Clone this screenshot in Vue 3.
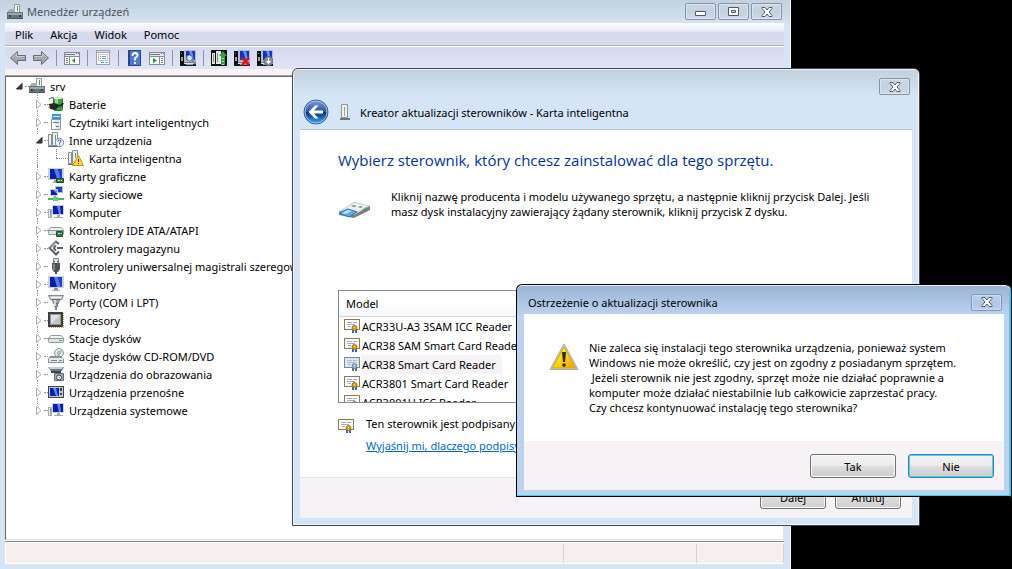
<template>
  <div class="desktop">
    <svg class="sprite" aria-hidden="true">
      <symbol id="i-monitor" viewBox="0 0 16 16">
        <path d="M0 0h16v12H0z" fill="#c9d3d9" />
        <path d="M2 1h12v10H2z" fill="#0a1fa8" />
        <path d="M6 1h4l3 10H9z" fill="#4f7df0" />
        <path d="M10 1h4v10h-1z" fill="#1c3fd8" />
        <path d="M6 12h4v2H6z" fill="#8e979c" />
        <path d="M4 14h8v1H4z" fill="#a4acb0" />
      </symbol>
      <symbol id="i-root" viewBox="0 0 16 16">
        <path d="M7.500.5h5v8h-5z" fill="#f4f6f6" stroke="#909898" />
        <path d="M10 2h1v5h-1z" fill="#4a9a48" />
        <path d="M1 7l2-2h5v3h7v2H1z" fill="#a3afb6" />
        <path d="M0 8h16v6H0z" fill="#66747c" />
        <path d="M1 9h14v2H1z" fill="#9aa7ae" />
        <path d="M2 11h2v2H2zM12 11h2v2h-2z" fill="#3b464d" />
        <path d="M0 14h16v1H0z" fill="#48535a" />
      </symbol>
      <symbol id="i-battery" viewBox="0 0 16 16">
        <rect x="5.500" y="1.500" width="9" height="13" rx="2" fill="#35a83c" stroke="#1c6b22" />
        <path d="M7 3h3v10H7z" fill="#8de083" />
        <path d="M6 1h8v2H6z" fill="#dfe6df" />
        <path d="M0 8.500h2M0 11.500h2" stroke="#d2a53a" />
        <path d="M1 8l5-1 4 1v4l-3 2-5-1z" fill="#242a26" />
        <path d="M10 10q4 0 5-3" fill="none" stroke="#242a26" stroke-width="2" />
        <path d="M1 3q2-2 5-1" fill="none" stroke="#454b46" />
      </symbol>
      <symbol id="i-reader" viewBox="0 0 16 16">
        <path d="M4 0h9v6H4z" fill="#2f9ae0" />
        <path d="M5 2h7v1H5z" fill="#d6effb" />
        <path d="M3.500 5.500h9v10h-9z" fill="#e4e8ea" stroke="#8b9499" />
        <path d="M4 6h3v9H4z" fill="#fff" />
        <path d="M5 8.500h6M8 12.500h3" stroke="#6e797f" />
      </symbol>
      <symbol id="i-unknown" viewBox="0 0 16 16">
        <path d="M.5 2.500h3v11h-3zM4.500.5h5v13h-5z" fill="#edf0f0" stroke="#858e91" />
        <path d="M7 3h1v5H7z" fill="#58a84a" />
        <path d="M0 14h11v1H0z" fill="#626b6e" />
        <circle cx="11.500" cy="10.500" r="4.200" fill="#eef5fe" stroke="#7488b8" />
        <path d="M10 9.500q0-1.500 1.500-1.500t1.500 1.200q0 1-1.500 1.600v.8M11.500 12.500v1" fill="none" stroke="#254ec2" />
      </symbol>
      <symbol id="i-warn-device" viewBox="0 0 16 16">
        <path d="M.5 2.500h3v11h-3zM4.500.5h5v13h-5z" fill="#edf0f0" stroke="#858e91" />
        <path d="M7 3h1v5H7z" fill="#58a84a" />
        <path d="M0 14h9v1H0z" fill="#626b6e" />
        <path d="M10.500 5.500L15.500 15.500h-11z" fill="#ffd928" stroke="#c79409" />
        <path d="M10 9h1v3h-1zM10 13h1v1h-1z" fill="#3a3000" />
      </symbol>
      <symbol id="i-display" viewBox="0 0 16 16">
        <use href="#i-monitor" />
        <path d="M8.500 10.500h7v4h-7z" fill="#317c48" stroke="#1d4f2c" />
        <path d="M10 12h2v1h-2zM13 12h1v1h-1z" fill="#c8ead0" />
      </symbol>
      <symbol id="i-network" viewBox="0 0 16 16">
        <path d="M7.500.5h7v6h-7z" fill="#1d3bce" stroke="#b3c0d2" />
        <path d="M2.500 3.500h7v6h-7z" fill="#0a20a8" stroke="#c6d0dd" />
        <path d="M5 4h4v4z" fill="#6f98f2" />
        <path d="M6 10h2v3H6z" fill="#8b989e" />
        <path d="M0 12h16v2H0z" fill="#45b765" />
        <path d="M5 11h5v4H5z" fill="#6cc98a" />
      </symbol>
      <symbol id="i-computer" viewBox="0 0 16 16">
        <path d="M4 1h12v10H4z" fill="#c9d3d9" />
        <path d="M5 2h10v8H5z" fill="#0a1fa8" />
        <path d="M9 2h3l1 8h-2z" fill="#5a86f2" />
        <path d="M9 11h3v2H9zM6 13h9v1H6z" fill="#a1abb0" />
        <path d="M0 5h4v9H0z" fill="#a6b0b5" />
        <path d="M1 6h1v7H1z" fill="#e8eced" />
        <path d="M2 7h1v2H2z" fill="#46a448" />
      </symbol>
      <symbol id="i-drive" viewBox="0 0 16 16">
        <path d="M3 5h10l3 3v3q0 2-2 2H2q-2 0-2-2V8z" fill="#8f999d" />
        <path d="M3 6h10l2 2H1z" fill="#eef1f2" />
        <path d="M1 9h14v3H1z" fill="#dfe4e5" />
        <path d="M11 10h3v1h-3z" fill="#39b54a" />
      </symbol>
      <symbol id="i-ide" viewBox="0 0 16 16">
        <use href="#i-drive" />
        <path d="M8.500 9.500h6v5h-6z" fill="#317c48" stroke="#1d4f2c" />
        <path d="M10 11h2v1h-2zM13 11h1v1h-1z" fill="#c8ead0" />
      </symbol>
      <symbol id="i-storage" viewBox="0 0 16 16">
        <path d="M11 4L8 1.500 1.500 8 8 14.500l3-3M5.500 8L8 5.500M8 10.500L5.500 8M9 8h6" fill="none" stroke="#596165" stroke-width="2" />
        <path d="M2 7.500l6-6" stroke="#aeb4b6" />
      </symbol>
      <symbol id="i-usb" viewBox="0 0 16 16">
        <path d="M5.500.5h5v5h-5z" fill="#d9dddf" stroke="#7c8488" />
        <path d="M6 3h1v1H6zM9 3h1v1H9z" fill="#5a6266" />
        <path d="M4 5h8v6l-2 3H6l-2-3z" fill="#4c5356" />
        <path d="M5 6h2v6H5z" fill="#7d868a" />
        <path d="M7 14h2v2H7z" fill="#4c5356" />
      </symbol>
      <symbol id="i-port" viewBox="0 0 16 16">
        <path d="M.5 1.500h15l-2 4h-11z" fill="#c8ced1" stroke="#7e888d" />
        <path d="M3 3h10v1H3z" fill="#fff" />
        <path d="M4.500 5.500h7l-1 4h-5z" fill="#9da6ab" stroke="#69747a" />
        <path d="M6 10h4v3H6zM7 13h2v3H7z" fill="#7e888d" />
        <path d="M6 6h2v6H6z" fill="#d5dadc" />
      </symbol>
      <symbol id="i-cpu" viewBox="0 0 16 16">
        <path d="M0 0h15v15H0z" fill="#3b4043" />
        <path d="M2 2h11v11H2z" fill="#8f979a" />
        <path d="M3 3h9v9H3z" fill="#dfe3e4" />
        <path d="M12 3v9H3z" fill="#bec5c8" />
        <path d="M1 15.500h15M15.500 1v14" stroke="#c99a31" stroke-dasharray="1 1" />
      </symbol>
      <symbol id="i-disc" viewBox="0 0 16 16">
        <circle cx="11" cy="5" r="4.500" fill="#dfe6ea" stroke="#8c979c" />
        <path d="M11 5l3-4 1 2zM11 5L8 9l4 0z" fill="#8dcf9a" />
        <circle cx="11" cy="5" r="1.300" fill="#fff" stroke="#89939a" />
        <path d="M2 8h11l3 3v4H0v-4z" fill="#8a9498" />
        <path d="M1 10h14v4H1z" fill="#e3e7e8" />
        <path d="M3 12h6v1H3z" fill="#798488" />
        <path d="M11 12h3v1h-3z" fill="#39b54a" />
      </symbol>
      <symbol id="i-imaging" viewBox="0 0 16 16">
        <path d="M0 1h16l-2 4H3z" fill="#6f7b80" />
        <path d="M1 1h14l-1 2H2z" fill="#b9d6de" />
        <path d="M3 5h10v2H3z" fill="#3e484c" />
        <path d="M6.500 7.500h9v7h-9z" fill="#a5afb3" stroke="#616c71" />
        <circle cx="11" cy="11.500" r="2.500" fill="#e8f2f7" stroke="#3b454b" />
        <path d="M11 11h1v1h-1z" fill="#247fc0" />
      </symbol>
      <symbol id="i-portable" viewBox="0 0 16 16">
        <path d="M0 2h16v12H0z" fill="#3f4649" />
        <path d="M1 3h14v10H1z" fill="#c2c8ca" />
        <path d="M2 4h9v8H2z" fill="#0a20a8" />
        <path d="M5 4h3l2 8H8z" fill="#5e8af2" />
        <path d="M12 4h2v3h-2zM12 9h2v2h-2z" fill="#3f4649" />
      </symbol>
      <symbol id="i-cert" viewBox="0 0 16 16">
        <path d="M0 1h16v11H0z" fill="#8b7a55" />
        <path d="M1 2h14v9H1z" fill="#fffdf5" />
        <path d="M3 4.500h5M9 4.500h4M3 6.500h8M4 8.500h3" stroke="#9baad6" />
        <path d="M8 11h2v4H8zM11 11h2v4h-2z" fill="#2b62d4" />
        <circle cx="10.500" cy="10" r="2.500" fill="#dfa416" stroke="#aa7408" />
        <path d="M10 9h1v1h-1z" fill="#ffe792" />
      </symbol>
      <symbol id="i-back" viewBox="0 0 16 16">
        <path d="M7.500 1.500v4h8v5h-8v4L.5 8z" fill="#a4a6ad" stroke="#686a70" stroke-linejoin="round" />
        <path d="M2.500 7.500l4-4v3h8" fill="none" stroke="#c9cbd0" />
      </symbol>
      <symbol id="i-forward" viewBox="0 0 16 16">
        <path d="M8.500 1.500v4h-8v5h8v4l7-6.500z" fill="#a4a6ad" stroke="#686a70" stroke-linejoin="round" />
        <path d="M1.500 6.500h8v-3l4 4" fill="none" stroke="#c9cbd0" />
      </symbol>
      <symbol id="i-pane-left" viewBox="0 0 16 16">
        <path d="M0 2h16v13H0z" fill="#868b92" />
        <path d="M1 7h4v7H1zM6 7h9v7H6z" fill="#fff" />
        <path d="M1 3h14v3H1z" fill="#e2e5ea" />
        <path d="M1 4h10v1H1zM12 3h1v1h-1zM14 3h1v1h-1zM2 8h2v1H2zM2 10h2v1H2zM2 12h2v1H2z" fill="#747980" />
        <path d="M11 8v5L8 10.500z" fill="#17a020" />
      </symbol>
      <symbol id="i-pane-right" viewBox="0 0 16 16">
        <path d="M0 2h16v13H0z" fill="#868b92" />
        <path d="M1 7h9v7H1zM11 7h4v7h-4z" fill="#fff" />
        <path d="M1 3h14v3H1z" fill="#e2e5ea" />
        <path d="M1 4h10v1H1zM12 3h1v1h-1zM14 3h1v1h-1zM12 8h2v1h-2zM12 10h2v1h-2zM12 12h2v1h-2z" fill="#747980" />
        <path d="M4 8v5l4-2.500z" fill="#17a020" />
      </symbol>
      <symbol id="i-props" viewBox="0 0 16 16">
        <path d="M1 0h14v15H1z" fill="#9ca1a8" />
        <path d="M2 3h12v11H2z" fill="#fff" />
        <path d="M2 1h12v1H2z" fill="#e2e4e8" />
        <path d="M3 4h10v7H3z" fill="#bfc3c9" />
        <path d="M4 5h8v5H4z" fill="#fff" />
        <path d="M5 6h1v1H5zM5 8h1v1H5z" fill="#2a9fcb" />
        <path d="M7 6h4v1H7zM7 8h4v1H7z" fill="#8c9198" />
        <path d="M6 12h3v1H6zM10 12h3v1h-3z" fill="#37b7df" />
      </symbol>
      <symbol id="i-help" viewBox="0 0 16 16">
        <path d="M2 0h13v16H2z" fill="#24439a" />
        <path d="M4 1h10v14H4z" fill="#4e78d6" />
        <path d="M6.500 6q0-3 2.500-3t2.500 2.500Q11.500 7 9 8v2.500M9 12v2" fill="none" stroke="#fff" stroke-width="1.800" />
      </symbol>
      <symbol id="i-tool-pc" viewBox="0 0 16 16">
        <path d="M0 1h4v13H0z" fill="#111" />
        <path d="M1 7h2v4H1z" fill="#9ca3a8" />
        <path d="M1 3h1v1H1z" fill="#35b84b" />
        <path d="M4 0h12v13H4z" fill="#b4bcc4" />
        <path d="M6 1h9v9H6z" fill="#1531c8" />
        <path d="M9 1h3l2 9h-2z" fill="#6894f4" />
        <path d="M4 12h12v1H4z" fill="#777f86" />
        <path d="M0 14h16v2H0z" fill="#16181a" />
        <path d="M6 14h7v1H6z" fill="#9aa1a7" />
      </symbol>
      <symbol id="i-scan" viewBox="0 0 16 16">
        <use href="#i-tool-pc" />
        <circle cx="9.500" cy="8" r="3" fill="#cde8fa" stroke="#5f6a75" />
        <path d="M11.500 10l4 4" stroke="#7b848e" stroke-width="2" />
      </symbol>
      <symbol id="i-update" viewBox="0 0 16 16">
        <path d="M0 0h16v16H0z" fill="#111" />
        <path d="M1 3h3v11H1zM5 1h5v13H5z" fill="#e3e7e5" />
        <path d="M2 4h1v8H2zM6 3h1v9H6z" fill="#7f8a84" />
        <path d="M12 1l4 5h-2v9h-4V6H8z" fill="#2ea043" />
        <path d="M11 8.500h2M11 11.500h2M11 14.500h2" stroke="#a3e3ad" />
      </symbol>
      <symbol id="i-uninstall" viewBox="0 0 16 16">
        <use href="#i-tool-pc" />
        <path d="M8 8l7 7M15 8l-7 7" stroke="#e01414" stroke-width="2.500" />
      </symbol>
      <symbol id="i-disable" viewBox="0 0 16 16">
        <use href="#i-tool-pc" />
        <circle cx="11.500" cy="11" r="4.500" fill="#8a9096" stroke="#61676d" />
        <path d="M11 8h1v3h2l-2.500 3L9 11h2z" fill="#fff" />
      </symbol>
      <symbol id="i-close" viewBox="0 0 12 10">
        <path d="M1 .5h3L6 3 8 .5h3v1L8 5l3 3.500v1H8L6 7 4 9.500H1v-1L4 5 1 1.500z" fill="#fff" stroke="#50596b" />
      </symbol>
    </svg>

    <section class="window window--main">
      <header class="titlebar">
        <svg class="icon"><use href="#i-root" /></svg>
        <h1 class="titlebar__text">Menedżer urządzeń</h1>
        <div class="titlebar__buttons">
          <button type="button" class="caption-btn" aria-label="Minimalizuj">
            <svg width="12" height="10"><path d="M.5 4.500h10v4H.5z" fill="#fff" stroke="#50596b" /></svg>
          </button>
          <button type="button" class="caption-btn" aria-label="Maksymalizuj">
            <svg width="12" height="10">
              <path d="M.5.5h10v8H.5z" fill="#fff" stroke="#50596b" />
              <path d="M3.500 3.500h4v2h-4z" fill="#c8d5e4" stroke="#50596b" />
            </svg>
          </button>
          <button type="button" class="caption-btn" aria-label="Zamknij">
            <svg width="12" height="10"><use href="#i-close" /></svg>
          </button>
        </div>
      </header>

      <div class="main">
        <nav class="menubar">
          <button v-for="item in menu" :key="item" type="button" class="menubar__item">{{ item }}</button>
        </nav>

        <div class="toolbar">
          <div v-for="(group, i) in tools" :key="i" class="toolbar__group">
            <button
              v-for="tool in group"
              :key="tool.icon"
              type="button"
              class="toolbar__btn"
              :aria-label="tool.label"
            >
              <svg class="icon"><use :href="`#i-${tool.icon}`" /></svg>
            </button>
          </div>
        </div>

        <ul class="tree">
          <li
            v-for="node in nodes"
            :key="node.label"
            :class="['tree__row', `tree__row--level${node.level}`]"
          >
            <span class="tree__toggle">
              <svg v-if="node.open" width="7" height="7"><path d="M6 .5V6H.5z" fill="#404040" stroke="#222" /></svg>
              <svg v-else-if="node.level < 2" width="7" height="9">
                <path d="M.5.5v8l4.500-4z" fill="#fff" stroke="#a6a6a6" />
              </svg>
            </span>
            <span class="tree__stub"></span>
            <svg class="icon"><use :href="`#i-${node.icon}`" /></svg>
            <span class="tree__label">{{ node.label }}</span>
          </li>
        </ul>

        <footer class="statusbar">
          <span class="statusbar__cell statusbar__cell--wide"></span>
          <span class="statusbar__cell statusbar__cell--mid"></span>
          <span class="statusbar__cell statusbar__cell--end"></span>
        </footer>
      </div>
    </section>

    <section class="window window--wizard">
      <header class="wizard-top">
        <button type="button" class="caption-btn" aria-label="Zamknij">
          <svg width="12" height="10"><use href="#i-close" /></svg>
        </button>
      </header>
      <div class="wizard-nav">
        <button type="button" class="nav-back" aria-label="Wstecz">
          <svg width="26" height="26" viewBox="0 0 26 26">
            <defs>
              <linearGradient id="navBlue" x1="0" y1="0" x2="0" y2="1">
                <stop offset="0" stop-color="#7f9fd2" />
                <stop offset=".48" stop-color="#2655a6" />
                <stop offset=".52" stop-color="#0c2f84" />
                <stop offset="1" stop-color="#35b3ee" />
              </linearGradient>
            </defs>
            <circle cx="13" cy="13" r="12" fill="url(#navBlue)" stroke="#34568f" />
            <circle cx="13" cy="13" r="11" fill="none" stroke="#a9c8ea" />
            <path d="M12 6.500h3.500L11 11.500h9v3h-9l4.500 5H12L5.500 13z" fill="#fff" />
          </svg>
        </button>
        <svg width="10" height="16">
          <path d="M1.500.5h6v13h-6z" fill="#eef0ef" stroke="#8f9694" />
          <path d="M4 3h1v9H4z" fill="#a2a8a5" />
          <path d="M4 3h1v3H4z" fill="#6fae42" />
          <path d="M0 14h10v2H0z" fill="#70777a" />
        </svg>
        <span class="wizard-nav__title">Kreator aktualizacji sterowników - Karta inteligentna</span>
      </div>

      <div class="wizard-body">
        <h2 class="wizard-body__heading">Wybierz sterownik, który chcesz zainstalować dla tego sprzętu.</h2>
        <div class="intro">
          <svg class="intro__icon" width="33" height="18" viewBox="0 0 33 18">
            <path d="M1 11L16 1l16 4v4L16 17 1 14z" fill="#777f84" />
            <path d="M1 10L16 1l16 4-16 9z" fill="#d3d9dc" />
            <path d="M8 7l9-5 12 3-9 5z" fill="#eef1f2" />
            <path d="M13 5l3-1 3 1-3 1zM20 6l3-1 2 1-3 1z" fill="#7f898e" />
            <path d="M24 9l5-3v1l-5 3z" fill="#4f9a58" />
            <path d="M1 12l9-4 9 3-8 5z" fill="#57acea" stroke="#2f78b8" />
            <path d="M4 12l6-3 4 1-7 3z" fill="#c4e6fb" />
          </svg>
          <p class="intro__text">
            Kliknij nazwę producenta i modelu używanego sprzętu, a następnie kliknij przycisk Dalej. Jeśli<br />
            masz dysk instalacyjny zawierający żądany sterownik, kliknij przycisk Z dysku.
          </p>
        </div>

        <div class="models">
          <table class="models__table">
            <thead>
              <tr><th scope="col">Model</th></tr>
            </thead>
            <tbody>
              <tr v-for="model in models" :key="model" :class="{ selected: model === selectedModel }">
                <td>
                  <div class="models__cell">
                    <svg class="icon"><use href="#i-cert" /></svg>
                    <span class="models__name">{{ model }}</span>
                  </div>
                </td>
              </tr>
            </tbody>
          </table>
        </div>

        <div class="signed">
          <svg class="icon"><use href="#i-cert" /></svg>
          <div class="signed__text">
            <span>Ten sterownik jest podpisany cyfrowo.</span>
            <a href="#" @click.prevent>Wyjaśnij mi, dlaczego podpisywanie sterowników jest ważne</a>
          </div>
        </div>
      </div>

      <footer class="wizard-footer">
        <button type="button" class="btn btn--small">Dalej</button>
        <button type="button" class="btn btn--small">Anuluj</button>
      </footer>
    </section>

    <section class="window window--alert" role="alertdialog" aria-labelledby="alertTitle">
      <header class="alert-title">
        <h2 id="alertTitle" class="alert-title__text">Ostrzeżenie o aktualizacji sterownika</h2>
        <button type="button" class="caption-btn caption-btn--active" aria-label="Zamknij">
          <svg width="12" height="10"><use href="#i-close" /></svg>
        </button>
      </header>
      <div class="alert-body">
        <svg class="alert-body__icon" width="30" height="28" viewBox="0 0 30 28">
          <defs>
            <linearGradient id="warnYellow" x1="0" y1="0" x2="1" y2="1">
              <stop offset=".3" stop-color="#fff200" />
              <stop offset="1" stop-color="#f39a00" />
            </linearGradient>
          </defs>
          <path d="M15 1L29 26.500H1z" fill="#c9cbd2" stroke="#a6a8b2" stroke-linejoin="round" />
          <path d="M15 4L26.500 25h-23z" fill="url(#warnYellow)" stroke="#d9a400" />
          <path d="M13 9h4l-1 10h-2z" fill="#2b2500" />
          <circle cx="15" cy="22" r="1.800" fill="#2b2500" />
        </svg>
        <p class="alert-body__text">
          <span v-for="line in warning" :key="line" class="alert-body__line">{{ line }}</span>
        </p>
      </div>
      <footer class="alert-footer">
        <button type="button" class="btn">Tak</button>
        <button type="button" class="btn btn--default">Nie</button>
      </footer>
    </section>
  </div>
</template>

<script setup>
import { ref } from 'vue';

const menu = ['Plik', 'Akcja', 'Widok', 'Pomoc'];

const tools = [
  [
    { icon: 'back', label: 'Wstecz' },
    { icon: 'forward', label: 'Dalej' }
  ],
  [{ icon: 'pane-left', label: 'Pokaż drzewo konsoli' }],
  [{ icon: 'props', label: 'Właściwości' }],
  [
    { icon: 'help', label: 'Pomoc' },
    { icon: 'pane-right', label: 'Pokaż okienko akcji' }
  ],
  [{ icon: 'scan', label: 'Skanuj w poszukiwaniu zmian sprzętu' }],
  [
    { icon: 'update', label: 'Aktualizuj sterownik' },
    { icon: 'uninstall', label: 'Odinstaluj' },
    { icon: 'disable', label: 'Wyłącz' }
  ]
];

const nodes = [
  { label: 'srv', icon: 'root', level: 0, open: true },
  { label: 'Baterie', icon: 'battery', level: 1 },
  { label: 'Czytniki kart inteligentnych', icon: 'reader', level: 1 },
  { label: 'Inne urządzenia', icon: 'unknown', level: 1, open: true },
  { label: 'Karta inteligentna', icon: 'warn-device', level: 2 },
  { label: 'Karty graficzne', icon: 'display', level: 1 },
  { label: 'Karty sieciowe', icon: 'network', level: 1 },
  { label: 'Komputer', icon: 'computer', level: 1 },
  { label: 'Kontrolery IDE ATA/ATAPI', icon: 'ide', level: 1 },
  { label: 'Kontrolery magazynu', icon: 'storage', level: 1 },
  { label: 'Kontrolery uniwersalnej magistrali szeregowej', icon: 'usb', level: 1 },
  { label: 'Monitory', icon: 'monitor', level: 1 },
  { label: 'Porty (COM i LPT)', icon: 'port', level: 1 },
  { label: 'Procesory', icon: 'cpu', level: 1 },
  { label: 'Stacje dysków', icon: 'drive', level: 1 },
  { label: 'Stacje dysków CD-ROM/DVD', icon: 'disc', level: 1 },
  { label: 'Urządzenia do obrazowania', icon: 'imaging', level: 1 },
  { label: 'Urządzenia przenośne', icon: 'portable', level: 1 },
  { label: 'Urządzenia systemowe', icon: 'computer', level: 1 }
];

const models = [
  'ACR33U-A3 3SAM ICC Reader',
  'ACR38 SAM Smart Card Reader',
  'ACR38 Smart Card Reader',
  'ACR3801 Smart Card Reader',
  'ACR3801U ICC Reader'
];

const selectedModel = ref('ACR38 Smart Card Reader');

const warning = [
  'Nie zaleca się instalacji tego sterownika urządzenia, ponieważ system',
  'Windows nie może określić, czy jest on zgodny z posiadanym sprzętem.',
  ' Jeżeli sterownik nie jest zgodny, sprzęt może nie działać poprawnie a',
  'komputer może działać niestabilnie lub całkowicie zaprzestać pracy.',
  'Czy chcesz kontynuować instalację tego sterownika?'
];
</script>

<style>
body {
  margin: 0;
  background: #000;
}
</style>

<style scoped>
.desktop {
  position: relative;
  min-height: 100vh;
  overflow: hidden;
  background: #000;
  color: #000;
  font: 11px/15px "Noto Sans", "Open Sans", sans-serif;
}

.desktop *,
.desktop *::before,
.desktop *::after {
  box-sizing: border-box;
}

button {
  font: inherit;
  color: inherit;
  padding: 0;
}

h1,
h2,
p,
ul {
  margin: 0;
  padding: 0;
  font-weight: 400;
}

.sprite {
  position: absolute;
  width: 0;
  height: 0;
}

.icon {
  width: 16px;
  height: 16px;
  flex: none;
}

.window {
  position: absolute;
  display: flex;
  flex-direction: column;
}

/* Caption buttons */
.caption-btn {
  width: 31px;
  height: 17px;
  display: flex;
  align-items: center;
  justify-content: center;
  border: 1px solid #8792ad;
  border-radius: 2px;
  background: linear-gradient(#cbd8e6, #c3d1e0 50%, #ccdaea);
  box-shadow: inset 0 0 0 1px #dae5f0;
}

.caption-btn--active {
  border-color: #8096bb;
  background: linear-gradient(#bfd2ec, #aec6e4 50%, #b9d0ee);
  box-shadow: inset 0 0 0 1px #cbdcf2;
}

/* Device manager */
.window--main {
  top: 0;
  left: 0;
  right: 221px;
  min-height: 100%;
  padding: 0 6px 5px 5px;
  border-right: 1px solid #f2f7fb;
  background: #d4e6f6;
}

.titlebar {
  display: flex;
  align-items: center;
  gap: 4px;
  height: 23px;
  margin: 0 -6px 0 -5px;
  padding: 0 8px 0 7px;
  background: linear-gradient(#c3d1de, #d5e3f1);
}

.titlebar__text {
  flex: 1;
  font-size: 11px;
  color: #4c5359;
}

.titlebar__buttons {
  display: flex;
  gap: 2px;
}

.main {
  flex: 1;
  display: flex;
  flex-direction: column;
  background: #f7f2f6;
}

.menubar {
  display: flex;
  gap: 17px;
  height: 23px;
  padding: 0 10px;
  border-bottom: 1px solid #aeb0be;
  background: linear-gradient(#fff, #e8ebf6 38%, #d5daed 40%, #d7dbee);
}

.menubar__item {
  border: none;
  background: none;
}

.toolbar {
  display: flex;
  align-items: center;
  height: 23px;
  border-top: 1px solid #fff;
  background: linear-gradient(#d5daed, #e2e3f7);
}

.toolbar__group {
  display: flex;
  gap: 7px;
  padding: 0 7px;
  border-right: 1px solid #8f92a0;
}

.toolbar__group:first-child {
  padding-left: 5px;
}

.toolbar__group:last-child {
  border-right: none;
}

.toolbar__btn {
  display: flex;
  border: none;
  background: none;
}

.tree {
  flex: 1;
  margin-top: 7px;
  list-style: none;
  background: #fff;
  border: 1px solid #696969;
  border-color: #696969 #e3e3e3 #e3e3e3 #696969;
  box-shadow: 0 -1px #a0a0a0;
}

.tree__row {
  position: relative;
  display: flex;
  align-items: center;
  height: 18px;
  padding-left: 10px;
  white-space: nowrap;
}

.tree__row--level1 {
  padding-left: 30px;
}

.tree__row--level2 {
  padding-left: 50px;
}

.tree__toggle {
  display: flex;
  width: 9px;
}

.tree__stub {
  width: 4px;
  border-top: 1px dotted #8c8c8c;
}

.tree__row--level1 .tree__toggle {
  width: 8px;
}

.tree__row--level2 .tree__toggle {
  width: 0;
}

.tree__row--level2 .tree__stub {
  width: 12px;
}

.tree__label {
  margin-left: 5px;
}

/* Dotted guides between the rows */
.tree__row--level1::before,
.tree__row--level2::before {
  content: "";
  position: absolute;
  left: 31px;
  top: -3px;
  height: 6px;
  border-left: 1px dotted #8c8c8c;
}

.tree__row--level2::before {
  top: 0;
  height: 18px;
}

.tree__row--level2::after {
  content: "";
  position: absolute;
  left: 50px;
  top: 0;
  height: 9px;
  border-left: 1px dotted #8c8c8c;
}

.statusbar {
  display: flex;
  height: 23px;
  margin-top: 1px;
  border-top: 1px solid #8b8b8b;
  border-bottom: 1px solid #fff;
  background: #f7eeee;
  box-shadow: inset 1px 1px #fff;
}

.statusbar__cell {
  margin-top: 2px;
  border-right: 1px solid #d9d3d5;
}

.statusbar__cell--wide {
  flex: 559;
}

.statusbar__cell--mid {
  flex: 133;
}

.statusbar__cell--end {
  flex: 86;
}

/* Driver wizard */
.window--wizard {
  top: 68px;
  left: 292px;
  right: 92px;
  padding: 1px 7px 7px;
  border: 1px solid #454545;
  border-radius: 6px 6px 0 0;
  background: linear-gradient(#c2d0dd, #d4e6f6 28px);
  box-shadow: inset 0 0 0 1px #edf4fa;
}

.wizard-top {
  display: flex;
  justify-content: flex-end;
  padding: 8px 2px 0 0;
}

.wizard-nav {
  display: flex;
  align-items: center;
  height: 35px;
  padding: 0 3px;
  border-bottom: 1px solid #b5c3cf;
}

.nav-back {
  display: flex;
  margin-right: 11px;
  border: none;
  background: none;
}

.wizard-nav__title {
  margin-left: 10px;
}

.wizard-body {
  padding: 19px 38px 24px;
  background: #fff;
}

.wizard-body__heading {
  font-family: "Open Sans", "Noto Sans", sans-serif;
  font-size: 15px;
  line-height: 22px;
  color: #039;
}

.intro {
  display: flex;
  align-items: center;
  gap: 20px;
  min-height: 30px;
  margin-top: 18px;
}

.intro__icon {
  flex: none;
  margin-top: 12px;
}

.intro__text {
  white-space: nowrap;
}

.models {
  height: 113px;
  margin-top: 71px;
  overflow: hidden;
  border: 1px solid #828790;
}

.models__table {
  width: 100%;
  border-collapse: collapse;
}

.models__table th {
  height: 25px;
  padding: 0 7px;
  text-align: left;
  font-weight: 400;
  border-bottom: 1px solid #d5d5d5;
  background: linear-gradient(#fff 45%, #f6f7f9);
}

.models__table td {
  padding: 0 5px;
}

.models__cell {
  display: flex;
  align-items: center;
  gap: 1px;
  height: 19px;
  white-space: nowrap;
}

.models__name {
  padding: 2px 6px 2px 1px;
}

.selected .models__name {
  background: #f7f2f6;
}

.selected .icon {
  filter: sepia(1) hue-rotate(165deg) brightness(0.9);
}

.signed {
  display: flex;
  gap: 12px;
  margin-top: 13px;
}

.signed .icon {
  margin-top: 2px;
}

.signed__text {
  display: flex;
  flex-direction: column;
  gap: 7px;
  white-space: nowrap;
}

.signed__text a {
  color: #06c;
}

.wizard-footer {
  display: flex;
  justify-content: flex-end;
  gap: 9px;
  padding: 7px 11px 9px;
  border-top: 1px solid #dfdfdf;
  background: #f7f2f6;
}

/* Push buttons */
.btn {
  width: 86px;
  height: 24px;
  border: 1px solid #707070;
  border-radius: 3px;
  background: linear-gradient(#f3f3f3, #ebebeb 50%, #dddddd 51%, #cfcfcf);
  box-shadow: inset 0 0 0 1px #fafafa;
}

.btn--small {
  width: 66px;
}

.btn--default {
  border-color: #3c7fb1;
  box-shadow: inset 0 0 0 1px #45d0f5;
}

/* Warning dialog */
.window--alert {
  top: 284px;
  left: 516px;
  right: 1px;
  padding: 0 6px 6px 7px;
  border: 1px solid #000;
  border-right-color: #2bd0f0;
  border-radius: 6px 6px 0 0;
  background: linear-gradient(#99b4d3, #bcd2ef 30px);
  box-shadow: inset 0 1px #e6eff8, inset -1px -1px #35d3f3;
}

.alert-title {
  display: flex;
  align-items: center;
  justify-content: space-between;
  height: 29px;
  padding: 5px 2px 0 4px;
}

.alert-title__text {
  font-size: 11px;
}

.alert-body {
  display: flex;
  gap: 10px;
  padding: 26px 25px;
  background: #fff;
}

.alert-body__icon {
  margin-top: 3px;
  flex: none;
}

.alert-body__line {
  display: block;
  white-space: pre;
}

.alert-footer {
  display: flex;
  justify-content: flex-end;
  gap: 12px;
  padding: 13px 10px 12px;
  background: #f7f2f6;
}
</style>
